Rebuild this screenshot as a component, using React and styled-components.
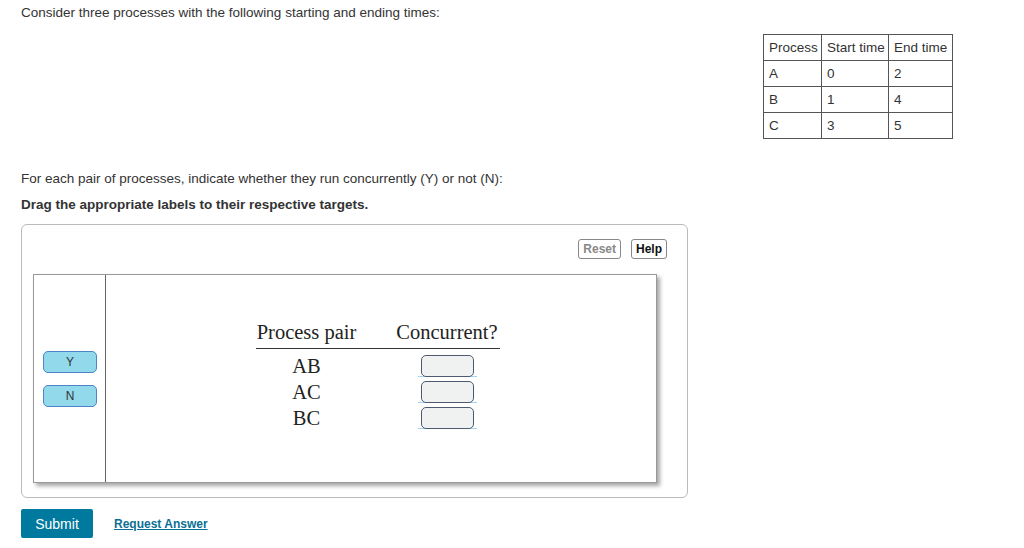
import styled, { createGlobalStyle } from 'styled-components';

const GlobalStyle = createGlobalStyle`
  body {
    margin: 0;
    background: #fff;
    font-family: "Liberation Sans", Arial, sans-serif;
    color: #333;
  }
`;

const processes = [
  { name: 'A', start: 0, end: 2 },
  { name: 'B', start: 1, end: 4 },
  { name: 'C', start: 3, end: 5 },
];

const pairs = ['AB', 'AC', 'BC'];
const labels = ['Y', 'N'];

const App = () => {
  return (
    <Page>
      <GlobalStyle />
      <Intro>Consider three processes with the following starting and ending times:</Intro>
      <TableRow>
        <TimesTable>
          <thead>
            <tr>
              <Cell $w={58}>Process</Cell>
              <Cell $w={67}>Start time</Cell>
              <Cell $w={64}>End time</Cell>
            </tr>
          </thead>
          <tbody>
            {processes.map(p => (
              <tr key={p.name}>
                <Cell>{p.name}</Cell>
                <Cell>{p.start}</Cell>
                <Cell>{p.end}</Cell>
              </tr>
            ))}
          </tbody>
        </TimesTable>
      </TableRow>

      <Question>For each pair of processes, indicate whether they run concurrently (Y) or not (N):</Question>
      <Instruction>Drag the appropriate labels to their respective targets.</Instruction>

      <Workspace>
        <Toolbar>
          <ToolButton $muted>Reset</ToolButton>
          <ToolButton>Help</ToolButton>
        </Toolbar>
        <Board>
          <LabelColumn>
            {labels.map(l => (
              <Chip key={l}>{l}</Chip>
            ))}
          </LabelColumn>
          <FigureArea>
            <Figure>
              <HeadCell>Process pair</HeadCell>
              <HeadCell $lead={37}>Concurrent?</HeadCell>
              <Spacer />
              <Spacer />
              {pairs.map(p => (
                <FigRow key={p}>
                  <PairCell>{p}</PairCell>
                  <TargetCell>
                    <TargetLine>
                      <Target />
                    </TargetLine>
                  </TargetCell>
                </FigRow>
              ))}
            </Figure>
          </FigureArea>
        </Board>
      </Workspace>

      <Actions>
        <SubmitButton>Submit</SubmitButton>
        <RequestLink href="#">Request Answer</RequestLink>
      </Actions>
    </Page>
  );
};

export default App;

const Page = styled.div`
  padding: 5px 0 0 21px;
  width: 932px;
  display: flex;
  flex-direction: column;
`;

const Intro = styled.p`
  margin: 0;
  font-size: 13.5px;
  line-height: 16px;
`;

const TableRow = styled.div`
  display: flex;
  justify-content: flex-end;
  margin-top: 13px;
`;

const TimesTable = styled.table`
  border-collapse: collapse;
  font-size: 13.5px;
  color: #333;
`;

const Cell = styled.td`
  border: 1px solid #555;
  height: 25px;
  padding: 0 0 0 5px;
  width: ${p => (p.$w ? `${p.$w - 6}px` : 'auto')};
  text-align: left;
  white-space: nowrap;
`;

const Question = styled.p`
  margin: 32px 0 0;
  font-size: 13.5px;
  line-height: 16px;
`;

const Instruction = styled.p`
  margin: 10px 0 0;
  font-size: 13.5px;
  line-height: 16px;
  font-weight: bold;
`;

const Workspace = styled.div`
  margin-top: 11px;
  width: 667px;
  height: 274px;
  box-sizing: border-box;
  border: 1px solid #bbb;
  border-radius: 6px;
  padding: 14px 20px 0 11px;
  display: flex;
  flex-direction: column;
`;

const Toolbar = styled.div`
  display: flex;
  justify-content: flex-end;
  gap: 10px;
  height: 20px;
`;

const ToolButton = styled.button`
  height: 20px;
  padding: 0 4px;
  border: 1px solid #888;
  border-radius: 3px;
  background: #fff;
  font-family: "Liberation Sans", Arial, sans-serif;
  font-size: 12px;
  font-weight: bold;
  color: ${p => (p.$muted ? '#888' : '#111')};
`;

const Board = styled.div`
  margin-top: 15px;
  width: 624px;
  height: 209px;
  box-sizing: border-box;
  border: 1px solid #999;
  box-shadow: 3px 3px 4px rgba(0, 0, 0, 0.35);
  display: flex;
`;

const LabelColumn = styled.div`
  width: 72px;
  border-right: 1px solid #666;
  display: flex;
  flex-direction: column;
  justify-content: center;
  align-items: flex-start;
  gap: 12px;
  padding-left: 9px;
  box-sizing: border-box;
`;

const Chip = styled.div`
  width: 54px;
  height: 22px;
  box-sizing: border-box;
  border: 1px solid #4d84c8;
  border-radius: 5px;
  background: #92d9eb;
  display: flex;
  align-items: center;
  justify-content: center;
  font-size: 12px;
  color: #333;
`;

const FigureArea = styled.div`
  flex: 1;
  display: flex;
  justify-content: center;
  align-items: center;
  padding: 0 7px 6px 0;
`;

const Figure = styled.div`
  display: grid;
  grid-template-columns: 102px 142px;
  font-family: "Liberation Serif", "Times New Roman", serif;
  color: #222;
  font-size: 20.5px;
`;

const HeadCell = styled.div`
  text-align: center;
  line-height: 22px;
  padding: 0 0 5px ${p => p.$lead || 0}px;
  border-bottom: 1.5px solid #333;
  white-space: nowrap;
`;

const Spacer = styled.div`
  height: 4px;
`;

const FigRow = styled.div`
  display: contents;
`;

const PairCell = styled.div`
  height: 26px;
  line-height: 26px;
  text-align: center;
`;

const TargetCell = styled.div`
  height: 26px;
  padding-left: 37px;
  display: flex;
  justify-content: center;
  align-items: center;
`;

const TargetLine = styled.div`
  padding: 0 3px;
  border-bottom: 1px solid #9fd3ee;
  display: flex;
`;

const Target = styled.div`
  width: 53px;
  height: 22px;
  box-sizing: border-box;
  border: 1.5px solid #4f5a6e;
  border-radius: 5px;
  background: #f0f1f1;
  margin-bottom: -1px;
`;

const Actions = styled.div`
  margin-top: 11px;
  display: flex;
  align-items: center;
  gap: 21px;
`;

const SubmitButton = styled.button`
  width: 72px;
  height: 29px;
  border: none;
  border-radius: 2px;
  background: #00799e;
  color: #fff;
  font-family: "Liberation Sans", Arial, sans-serif;
  font-size: 14px;
`;

const RequestLink = styled.a`
  font-size: 12px;
  font-weight: bold;
  color: #0b6f95;
  text-decoration: underline;
  margin-top: 1px;
`;
